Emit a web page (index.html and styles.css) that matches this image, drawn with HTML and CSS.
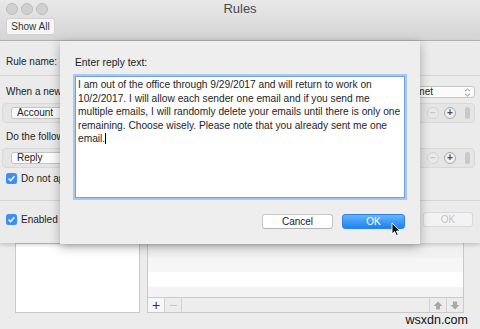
FILE: index.html
```html
<!DOCTYPE html>
<html lang="en">
<head>
    <meta charset="UTF-8">
    <title>Rules</title>
    <link rel="stylesheet" href="styles.css">
</head>
<body>

<div class="toolbar">
    <div class="titlerow">
        <div class="lights"><span></span><span></span><span></span></div>
        <div class="title">Rules</div>
        <div></div>
    </div>
    <button class="btn-showall">Show All</button>
</div>

<div class="stage">

    <!-- Rule editor sheet -->
    <div class="rule-sheet">
        <div class="row row-name"><span>Rule name:</span></div>
        <div class="sep"></div>

        <div class="row row-when">
            <span>When a new message arrives:</span>
            <div class="popup popup-match">
                <span>If any condition is met</span>
                <svg class="chevrons" width="7" height="9" viewBox="0 0 7 9"><path d="M1 3.2 L3.5 1 L6 3.2 M1 5.8 L3.5 8 L6 5.8" fill="none" stroke="#8a8a8a" stroke-width="1"/></svg>
            </div>
        </div>

        <div class="group">
            <div class="popup popup-small">Account</div>
            <div class="tools">
                <span class="circle minus">&minus;</span>
                <span class="circle plus">+</span>
                <span class="scroller"></span>
            </div>
        </div>

        <div class="row row-do"><span>Do the following:</span></div>

        <div class="group">
            <div class="popup popup-small">Reply</div>
            <div class="tools">
                <span class="circle minus">&minus;</span>
                <span class="circle plus">+</span>
                <span class="scroller"></span>
            </div>
        </div>

        <label class="check check-apply">
            <svg class="box" width="11" height="11" viewBox="0 0 11 11"><rect width="11" height="11" rx="2.5" fill="#3c8df5"/><path d="M2.6 5.6 L4.6 7.7 L8.4 3.2" fill="none" stroke="#fff" stroke-width="1.5"/></svg>
            Do not apply to messages already in the folder
        </label>

        <div class="sep sep-low"></div>

        <div class="row row-foot">
            <label class="check">
                <svg class="box" width="11" height="11" viewBox="0 0 11 11"><rect width="11" height="11" rx="2.5" fill="#3c8df5"/><path d="M2.6 5.6 L4.6 7.7 L8.4 3.2" fill="none" stroke="#fff" stroke-width="1.5"/></svg>
                Enabled
            </label>
            <button class="btn-dim">OK</button>
        </div>
    </div>

    <!-- Reply text dialog -->
    <div class="dialog">
        <div class="dialog-label">Enter reply text:</div>
        <div class="reply-box">
            I am out of the office through 9/29/2017 and will return to work on<br>
            10/2/2017. I will allow each sender one email and if you send me<br>
            multiple emails, I will randomly delete your emails until there is only one<br>
            remaining. Choose wisely. Please note that you already sent me one<br>
            email.<span class="caret"></span>
        </div>
        <div class="dialog-buttons">
            <button class="btn-cancel">Cancel</button>
            <button class="btn-ok">OK</button>
        </div>
        <svg class="pointer" width="11" height="15" viewBox="0 0 11 15"><path d="M1 1 L1 12 L3.6 9.6 L5.4 13.6 L7.2 12.8 L5.5 9 L9 9 Z" fill="#111" stroke="#fff" stroke-width="0.9" stroke-linejoin="round"/></svg>
    </div>
</div>

<div class="lists">
    <div class="list-left"></div>
    <div class="list-right">
        <div class="stripe s1"></div>
        <div class="stripe s2"></div>
        <div class="stripe s3"></div>
        <div class="stripe s4"></div>
        <div class="list-bar">
            <span class="bar-btn">+</span>
            <span class="bar-btn off">&minus;</span>
            <span class="bar-fill"></span>
            <span class="bar-btn arrow"><svg width="10" height="9" viewBox="0 0 10 9"><path d="M5 0.5 L9.5 5 L7 5 L7 8.5 L3 8.5 L3 5 L0.5 5 Z" fill="#a9a9a9"/></svg></span>
            <span class="bar-btn arrow"><svg width="10" height="9" viewBox="0 0 10 9"><path d="M5 8.5 L9.5 4 L7 4 L7 0.5 L3 0.5 L3 4 L0.5 4 Z" fill="#a9a9a9"/></svg></span>
        </div>
    </div>
</div>

<div class="footer">wsxdn.com</div>

</body>
</html>
```

FILE: styles.css
```css
body {
    margin: 0;
    width: 480px;
    height: 329px;
    overflow: hidden;
    background-color: #ececec;
    font-family: "Liberation Sans", Arial, sans-serif;
    font-size: 10px;
    color: #232323;
}
button {
    font-family: inherit;
    padding: 0;
}

/* window toolbar */
.toolbar {
    height: 40px;
    padding: 0 6px;
    background: linear-gradient(#e9e9e9, #d4d4d4);
    border-bottom: 1px solid #b4b4b4;
}
.titlerow {
    display: grid;
    grid-template-columns: 1fr auto 1fr;
    height: 17px;
}
.lights {
    display: flex;
    gap: 3px;
    padding-top: 3px;
}
.lights span {
    width: 10px;
    height: 10px;
    border-radius: 50%;
    background-color: #d0d0d0;
    border: 0.5px solid #bdbdbd;
}
.title {
    font-size: 13px;
    line-height: 18px;
    color: #4a4a4a;
}
.btn-showall {
    margin-top: 1px;
    width: 49px;
    height: 17px;
    font-size: 10px;
    color: #333;
    background-color: #f6f6f6;
    border: 1px solid #d2d2d2;
    border-radius: 3px;
}

.stage {
    position: relative;
    height: 202px;
}

/* sheet behind the dialog */
.rule-sheet {
    height: 202px;
    padding: 0 5px 0 2px;
    background-color: #ebebeb;
    box-shadow: 0 2px 4px rgba(0,0,0,0.18);
}
.row {
    display: flex;
    justify-content: space-between;
    align-items: center;
    padding-left: 4px;
    line-height: 12px;
    white-space: nowrap;
}
.row-name {
    height: 12px;
    padding-top: 15px;
    padding-bottom: 7px;
}
.sep {
    height: 1px;
    margin: 0 -5px 0 -2px;
    background-color: #d5d5d5;
}
.sep-low {
    margin-top: 16px;
}
.row-when {
    height: 12px;
    padding-top: 10px;
    padding-bottom: 5px;
}
.row-do {
    height: 12px;
    padding-top: 8px;
    padding-bottom: 5px;
}
.popup {
    height: 10px;
    line-height: 10px;
    background-color: #fbfbfb;
    border: 1px solid #c4c4c4;
    border-radius: 3px;
}
.popup-match {
    display: flex;
    align-items: center;
    gap: 31px;
    padding: 0 3px 0 8px;
}
.chevrons {
    display: block;
}
.group {
    display: flex;
    justify-content: space-between;
    align-items: center;
    height: 12px;
    padding: 3px 4px 3px 8px;
    background-color: #e5e5e5;
    border: 1px solid #d8d8d8;
    border-radius: 4px;
}
.popup-small {
    width: 140px;
    height: 10px;
    padding-left: 5px;
}
.tools {
    display: flex;
    align-items: center;
}
.circle {
    width: 10px;
    height: 10px;
    border-radius: 50%;
    text-align: center;
    font-size: 10px;
    line-height: 10px;
    font-weight: bold;
}
.minus {
    color: #c4c4c4;
    background-color: #e9e9e9;
    border: 0.5px solid #d3d3d3;
}
.plus {
    margin-left: 5px;
    color: #4d4d4d;
    background-color: #f0f0f0;
    border: 0.5px solid #a9a9a9;
}
.scroller {
    width: 5px;
    height: 12px;
    margin-left: 9px;
    border-radius: 3px;
    background-color: #c9c9c9;
}
.check {
    display: flex;
    align-items: center;
    gap: 4px;
    white-space: nowrap;
}
.check-apply {
    margin-top: 4px;
    padding-left: 4px;
    height: 12px;
}
.row-foot {
    padding-top: 11px;
}
.btn-dim {
    width: 50px;
    height: 15px;
    margin-right: 2px;
    font-size: 10px;
    color: #c3c3c3;
    background-color: #f3f3f3;
    border: 1px solid #d9d9d9;
    border-radius: 3px;
}

/* reply dialog */
.dialog {
    position: absolute;
    left: 60px;
    top: 0;
    width: 330px;
    height: 203px;
    padding: 0 15px;
    background-color: #eeeeee;
    box-shadow: 0 3px 10px rgba(0,0,0,0.3);
}
.dialog-label {
    padding-top: 15px;
    line-height: 14px;
    font-size: 10.3px;
}
.reply-box {
    margin-top: 6px;
    height: 118px;
    padding: 1px 2px;
    background-color: #fff;
    border: 1px solid #6ea1e0;
    box-shadow: 0 0 0 2px #a6c8f1;
    font-size: 10.2px;
    line-height: 13.5px;
    white-space: nowrap;
    color: #1e1e1e;
}
.caret {
    display: inline-block;
    width: 1px;
    height: 11px;
    vertical-align: -2px;
    background-color: #000;
}
.dialog-buttons {
    display: flex;
    justify-content: flex-end;
    gap: 9px;
    margin-top: 16px;
}
.btn-cancel {
    width: 71px;
    height: 15px;
    font-size: 10px;
    color: #222;
    background-color: #fff;
    border: 1px solid #c6c6c6;
    border-bottom-color: #b3b3b3;
    border-radius: 3px;
}
.btn-ok {
    width: 63px;
    height: 15px;
    font-size: 10px;
    color: #fff;
    background: linear-gradient(#6ab2fa, #1d82f6);
    border: 1px solid #2c83ea;
    border-radius: 3px;
}
.pointer {
    position: absolute;
    left: 331px;
    top: 181px;
}

/* lists under the sheet */
.lists {
    display: flex;
    gap: 7px;
    height: 70px;
    padding: 0 16px 0 15px;
}
.list-left {
    width: 123px;
    background-color: #fff;
    border: 1px solid #c9c9c9;
}
.list-right {
    display: flex;
    flex-direction: column;
    flex: 1;
    border: 1px solid #c9c9c9;
    border-top: none;
}
.stripe {
    height: 15px;
}
.s1 { background-color: #f1f1f1; }
.s2 { background-color: #f6f6f6; }
.s3 { background-color: #fff; }
.s4 { height: 10px; background-color: #f3f3f3; }
.list-bar {
    display: flex;
    height: 14px;
    background-color: #ededed;
    border-top: 1px solid #cacaca;
}
.bar-btn {
    width: 16px;
    text-align: center;
    font-size: 14px;
    line-height: 14px;
    color: #333;
    background-color: #f7f7f7;
    border-right: 1px solid #d3d3d3;
}
.bar-btn.off {
    color: #c8c8c8;
    background-color: #ececec;
}
.bar-fill {
    flex: 1;
}
.bar-btn.arrow {
    background-color: #ececec;
    border-right: none;
    border-left: 1px solid #d3d3d3;
}
.arrow svg {
    display: block;
    margin: 3px auto 0;
}
.footer {
    padding-right: 12px;
    text-align: right;
    font-size: 12.5px;
    line-height: 14px;
    color: #111;
}
```
